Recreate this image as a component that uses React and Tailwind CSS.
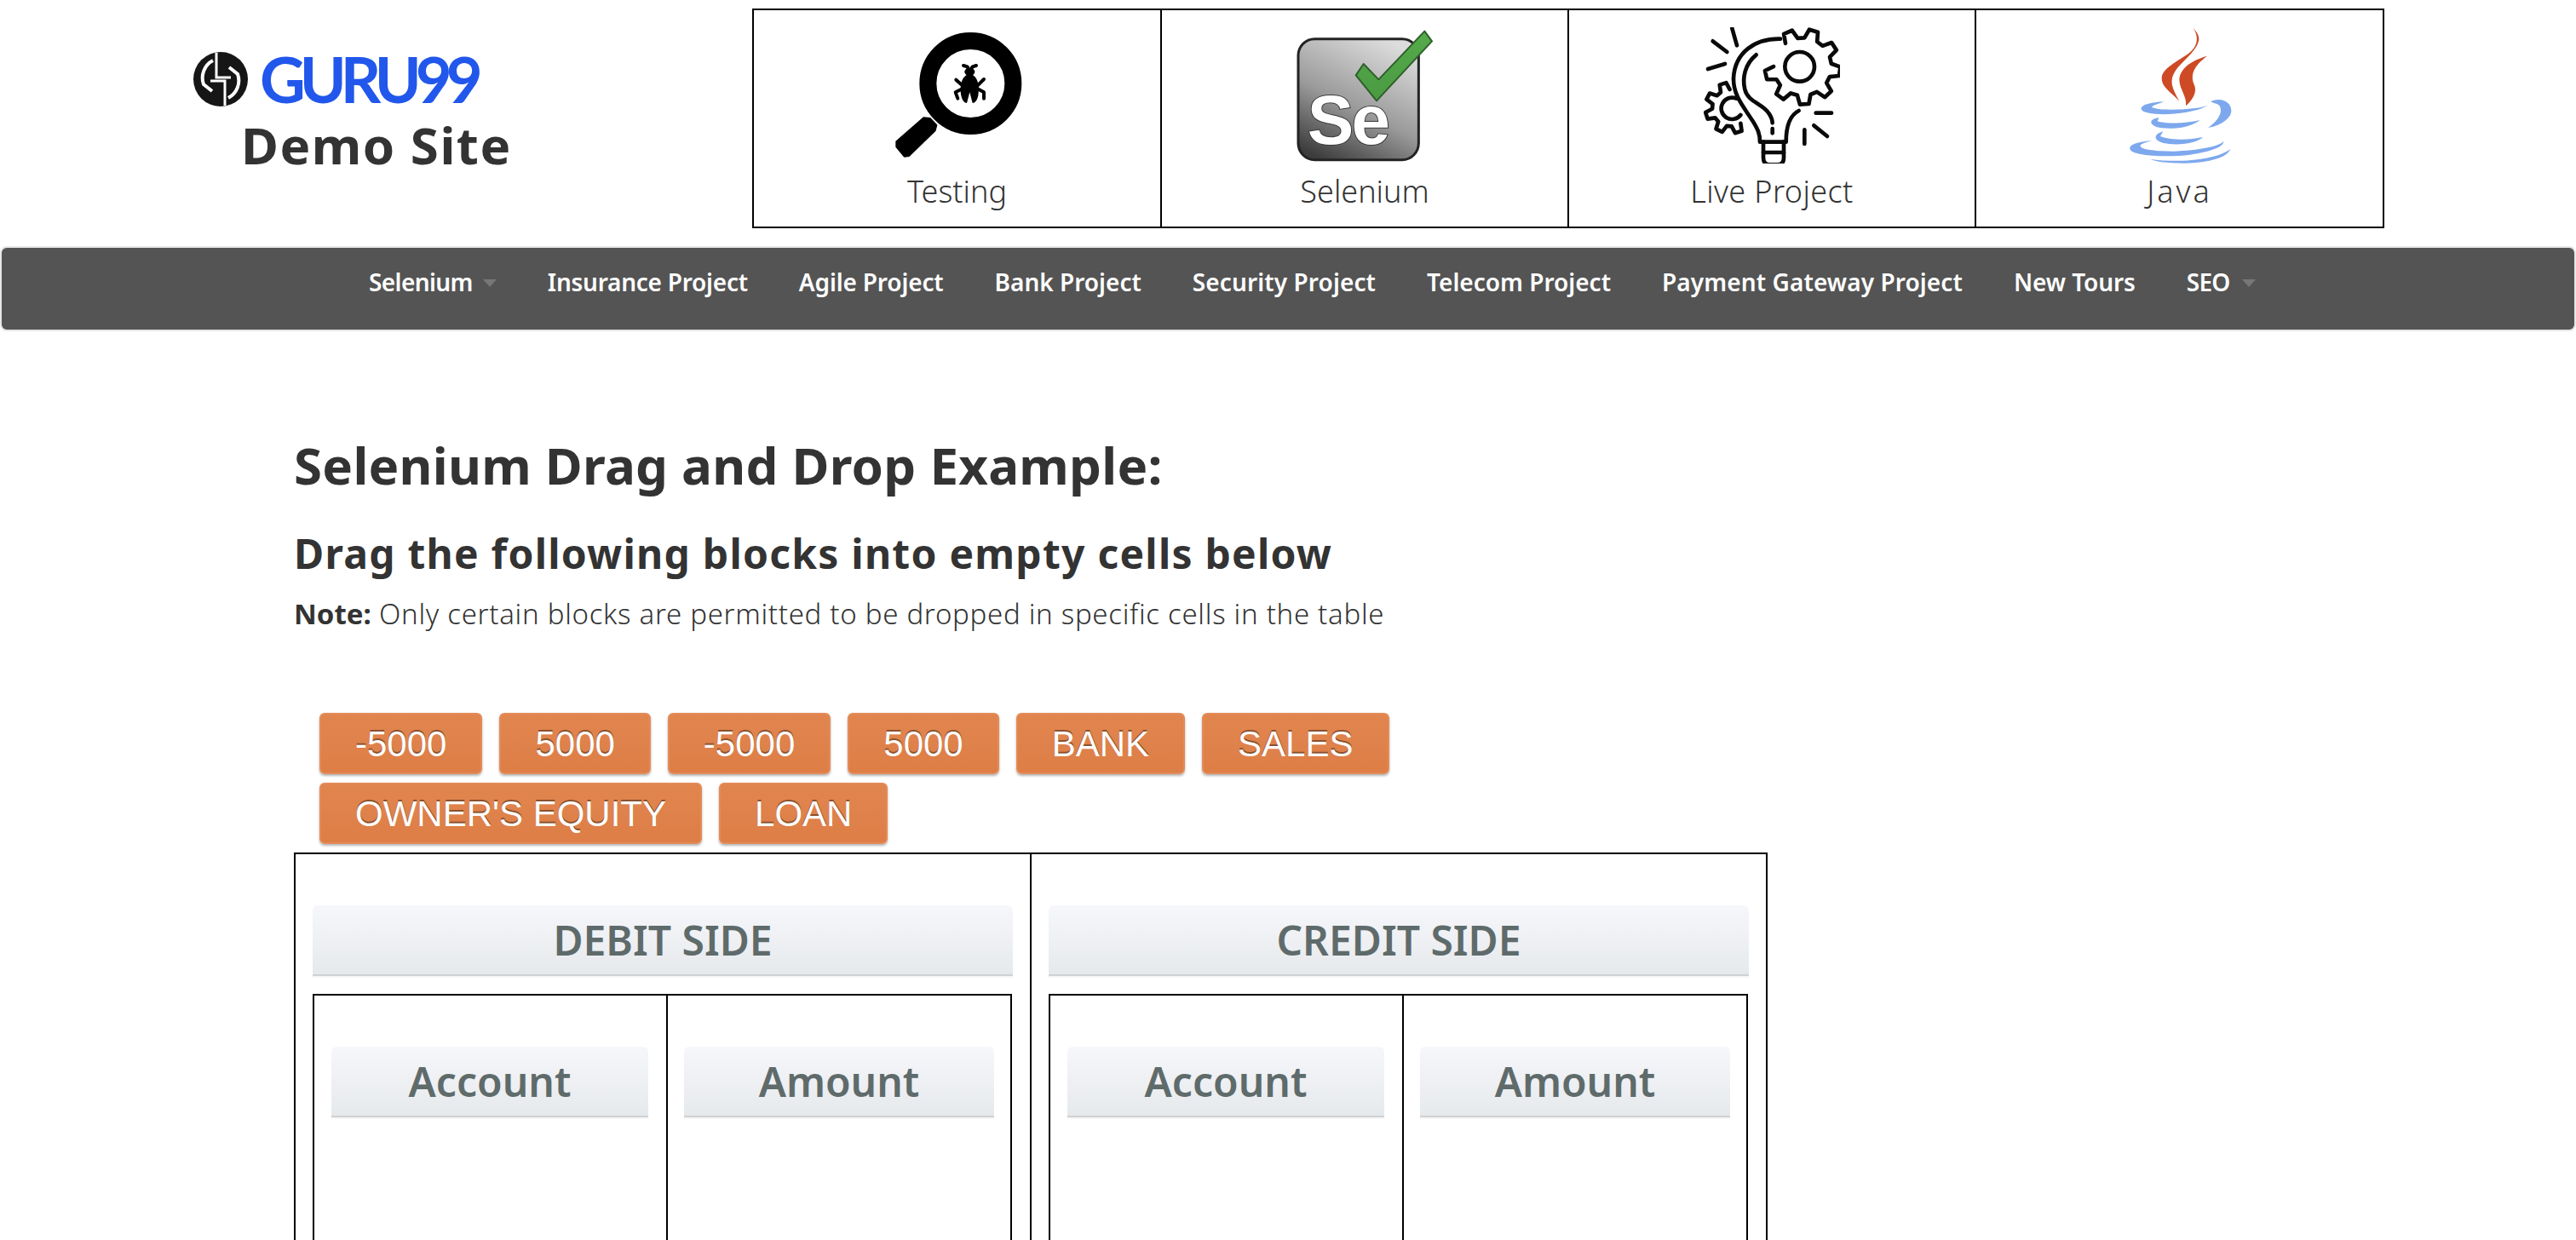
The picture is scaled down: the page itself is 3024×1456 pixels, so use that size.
import React from "react";

const gear = (cx, cy, rO, rI, teeth, start, end) => {
  const pts = [];
  const step = (Math.PI * 2) / teeth;
  for (let a = start; a <= end + 0.001; a += step) {
    const t = [
      [a, rI],
      [a + step * 0.16, rO],
      [a + step * 0.5, rO],
      [a + step * 0.66, rI],
    ];
    t.forEach(([ang, r]) => {
      if (ang <= end + 0.3) pts.push(`${(cx + Math.cos(ang) * r).toFixed(1)} ${(cy + Math.sin(ang) * r).toFixed(1)}`);
    });
  }
  return "M" + pts.join(" L");
};

const LogoMark = () => (
  <svg width="64" height="64" viewBox="0 0 64 64" className="shrink-0">
    <circle cx="32" cy="32" r="32" fill="#161616" />
    <g fill="none" stroke="#fff" strokeWidth="3">
      <path d="M27 1V30H44" />
      <path d="M23 10A23 23 0 0 0 12 38L22 46" strokeWidth="4" />
      <path d="M37 63V34H20" />
      <path d="M41 54A23 23 0 0 0 52 26L42 18" strokeWidth="4" />
    </g>
  </svg>
);

const TestingIcon = () => (
  <svg width="160" height="160" viewBox="39 21 480 480" className="blur-[0.5px]">
    <circle cx="325" cy="219" r="150" fill="none" stroke="#000" strokeWidth="60" />
    <path d="M160 340L182 342L205 366L200 385L108 474L92 476L64 442L64 424Z" fill="#000" stroke="#000" strokeWidth="6" strokeLinejoin="round" />
    <g fill="#000">
      <ellipse cx="322" cy="178" rx="18" ry="14" />
      <path d="M322 185C350 190 358 225 352 262C348 280 340 288 332 288L322 250L312 288C304 288 296 280 292 262C286 225 294 190 322 185Z" />
    </g>
    <g fill="none" stroke="#000" strokeWidth="12" strokeLinecap="round" strokeLinejoin="round">
      <path d="M322 178L314 160L300 156" />
      <path d="M322 178L332 160L345 156" />
      <path d="M296 226L274 206" />
      <path d="M350 226L372 204" />
      <path d="M296 238L272 250L280 272" />
      <path d="M350 238L372 250L372 272" />
    </g>
  </svg>
);

const SeleniumIcon = () => (
  <svg width="160" height="160" viewBox="36 21 480 480" className="blur-[0.5px]">
    <defs>
      <linearGradient id="seBg" x1="0.7" y1="0" x2="0.2" y2="1">
        <stop offset="0" stopColor="#dcdcdc" />
        <stop offset="0.55" stopColor="#9a9a9a" />
        <stop offset="1" stopColor="#3c3c3c" />
      </linearGradient>
      <linearGradient id="seCk" x1="0" y1="0" x2="0" y2="1">
        <stop offset="0" stopColor="#55ab4a" />
        <stop offset="1" stopColor="#4a9a43" />
      </linearGradient>
    </defs>
    <rect x="42" y="62" width="424" height="426" rx="58" fill="url(#seBg)" stroke="#232323" strokeWidth="9" />
    <text x="74" y="432" fontFamily="'Liberation Sans', sans-serif" fontWeight="700" fontSize="245" fill="#fff" stroke="#3a3a3a" strokeWidth="6" paintOrder="stroke" letterSpacing="-8">Se</text>
    <path d="M272 150L325 205L487 35L513 70L318 280L245 190Z" fill="url(#seCk)" stroke="#2f5f2c" strokeWidth="6" strokeLinejoin="round" />
  </svg>
);

const LiveIcon = () => (
  <svg width="160" height="160" viewBox="30 21 480 480" className="blur-[0.5px]" fill="none" stroke="#0a0a0a" strokeWidth="14" strokeLinecap="round" strokeLinejoin="round">
    <path d={gear(378, 160, 133, 102, 9, -2.2, 2.9)} />
    <circle cx="368" cy="160" r="52" />
    <path d={gear(125, 305, 90, 65, 8, 1.0, 4.6)} />
    <path d="M160 330A38 38 0 1 1 145 272" />
    <path d="M300 62C210 60 140 110 135 200C133 260 170 300 205 355C220 380 228 395 228 425H320C320 370 335 330 365 315" />
    <path d="M240 425V480Q240 505 262 505H290Q312 505 312 480V425" />
    <path d="M240 462H312" />
    <path d="M215 118C175 150 165 200 175 240C185 285 240 290 260 325C270 340 272 350 272 358" />
    <path d="M272 378V394" />
    <path d="M130 25L147 85" />
    <path d="M62 70L112 108" />
    <path d="M45 168L105 150" />
    <path d="M425 323H480" />
    <path d="M418 367L465 405" />
    <path d="M385 382V432" />
  </svg>
);

const JavaIcon = () => (
  <svg width="160" height="160" viewBox="24 21 480 480" className="blur-[0.5px]">
    <g fill="#cd4a25">
      <path d="M310 22C335 60 325 95 285 120C240 150 200 170 200 200C200 235 240 255 262 282C240 240 225 215 245 180C265 145 320 110 330 70C335 50 320 35 310 22Z" />
      <path d="M360 122C315 135 265 160 262 205C262 240 290 265 285 298C310 275 325 250 315 225C300 190 310 160 360 122Z" />
    </g>
    <g fill="#7ea8ee">
      <path d="M210 283C160 285 125 295 128 310C135 335 290 335 362 298C300 315 180 315 165 302C170 295 190 290 210 283Z" />
      <path d="M372 283C410 265 445 285 445 315C445 345 400 370 363 375C400 350 415 320 405 300C400 290 385 290 372 283Z" />
      <path d="M190 340C150 345 155 370 200 376C250 382 310 370 335 347C290 360 210 362 185 352Z" />
      <path d="M205 388C165 400 170 425 225 432C280 437 330 425 345 408C300 418 230 420 195 405Z" />
      <path d="M165 420C110 425 85 435 88 450C95 475 220 480 300 470C360 462 420 445 418 423C405 440 330 455 240 458C170 458 120 450 125 437C130 430 150 425 165 420Z" />
      <path d="M160 485C250 500 390 490 442 450C430 480 370 498 280 500C220 500 180 495 160 485Z" />
    </g>
  </svg>
);

const Caret = ({ gap }) => (
  <span className={`${gap} mt-[17px] h-0 w-0 border-x-8 border-t-[9px] border-x-transparent border-t-[#777]`} />
);

const Tile = ({ icon, label, border, track }) => (
  <div className={`flex flex-col items-center pt-[20px] ${border}`}>
    {icon}
    <div className={`mt-[11px] text-[36px] leading-[44px] font-light text-[#333] ${track}`}>{label}</div>
  </div>
);

const nav = [
  ["Selenium", "ml-3", "tracking-[-0.6px]"],
  ["Insurance Project", "", "tracking-[-0.25px]"],
  ["Agile Project", "", "tracking-[-0.15px]"],
  ["Bank Project", "", "tracking-[0px]"],
  ["Security Project", "", "tracking-[0.1px]"],
  ["Telecom Project", "", "tracking-[0px]"],
  ["Payment Gateway Project", "", "tracking-[0.1px]"],
  ["New Tours", "", "tracking-[-0.1px]"],
  ["SEO", "ml-[14px]", "tracking-[-0.7px]"],
];

const btns = ["-5000", "5000", "-5000", "5000", "BANK", "SALES", "OWNER'S EQUITY", "LOAN"];

const Head = ({ children }) => (
  <div className="flex h-[83px] items-center justify-center rounded-t-[6px] border-b-2 border-[#cfd1d3] bg-[linear-gradient(#f6f7fb,#e6e9ec)] text-[48px] font-semibold leading-none text-[#5f6b6b] shadow-[0_2px_0_#f6f6f6]">
    {children}
  </div>
);

const Side = ({ title, border }) => (
  <div className={`px-[20px] pt-[60px] ${border}`}>
    <Head>{title}</Head>
    <div className="mt-[21px] grid h-[500px] w-[821px] grid-cols-[415px_402px] border-2 border-black">
      <div className="border-r-2 border-black pl-[20px] pr-[21px] pt-[60px]">
        <Head>Account</Head>
      </div>
      <div className="px-[19px] pt-[60px]">
        <Head>Amount</Head>
      </div>
    </div>
  </div>
);

export default function App() {
  return (
    <div className="h-[1456px] w-[3024px] overflow-hidden bg-white font-['Noto_Sans',sans-serif] text-[#333]">
      <header className="flex pt-[10px]">
        <div className="w-[883px] pl-[227px] pt-[48px]">
          <div className="flex items-center">
            <LogoMark />
            <span className="ml-[14px] font-['Lato',sans-serif] text-[74px] font-bold leading-[70px] tracking-[-7px] text-[#2257ec]">GURU99</span>
          </div>
          <div className="ml-[56px] mt-[7px] text-[60px] font-bold leading-[70px] tracking-[1.5px] text-[#333]">Demo Site</div>
        </div>
        <div className="grid h-[258px] w-[1916px] grid-cols-[479px_478px_478px_477px] border-2 border-black">
          <Tile icon={<TestingIcon />} label="Testing" track="" border="border-r-2 border-black" />
          <Tile icon={<SeleniumIcon />} label="Selenium" track="" border="border-r-2 border-black" />
          <Tile icon={<LiveIcon />} label="Live Project" track="tracking-[0.4px]" border="border-r-2 border-black" />
          <Tile icon={<JavaIcon />} label="Java" track="tracking-[3px]" border="" />
        </div>
      </header>

      <nav className="mt-[21px] flex h-[100px] rounded-[8px] border-2 border-[#e7e7e7] bg-[#545454] pl-[401px] pt-[20px]">
        {nav.map(([t, c, tr]) => (
          <a key={t} className={`flex h-[40px] whitespace-nowrap px-[30px] text-[28px] font-semibold leading-[40px] text-white ${tr}`}>
            {t}
            {c && <Caret gap={c} />}
          </a>
        ))}
      </nav>

      <main className="pl-[345px]">
        <h1 className="mt-[124px] text-[60px] font-bold leading-[66px] tracking-[0.25px]">Selenium Drag and Drop Example:</h1>
        <h2 className="mt-[45px] text-[48px] font-bold leading-[52px] tracking-[1.25px]">Drag the following blocks into empty cells below</h2>
        <p className="mt-[25px] text-[33px] font-light leading-[40px] tracking-[0.7px]">
          <b className="font-bold tracking-[0px]">Note:</b> Only certain blocks are permitted to be dropped in specific cells in the table
        </p>
        <div className="mt-[96px] flex w-[1729px] flex-wrap gap-x-[20px] gap-y-[10px] pl-[30px]">
          {btns.map((b, i) => (
            <div
              key={i}
              className="flex h-[72px] items-center rounded-[6px] border-2 border-[#e48b58] bg-[linear-gradient(#e1854f,#dd7e46)] px-[40px] pt-[2px] font-['Liberation_Sans',sans-serif] text-[42px] leading-none text-white shadow-[0_2px_3px_rgba(0,0,0,0.3)] [text-shadow:0_-2px_0_#8a5230]"
            >
              {b}
            </div>
          ))}
        </div>
        <div className="mt-[10px] grid w-[1730px] grid-cols-[864px_862px] border-2 border-black">
          <Side title="DEBIT SIDE" border="border-r-2 border-black" />
          <Side title="CREDIT SIDE" border="" />
        </div>
      </main>
    </div>
  );
}
